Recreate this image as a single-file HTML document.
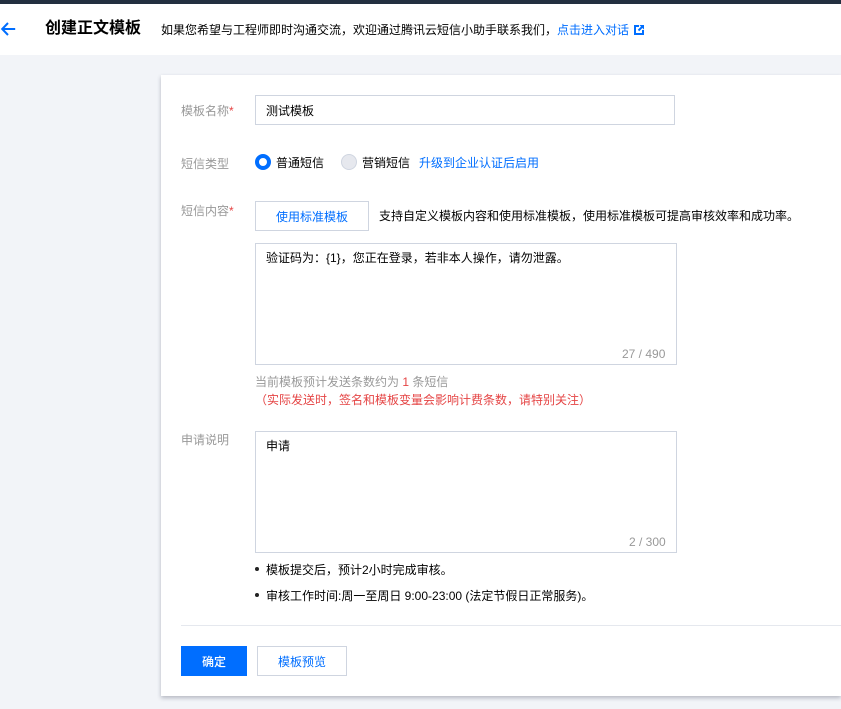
<!DOCTYPE html>
<html lang="zh-CN">
<head>
<meta charset="utf-8">
<title>创建正文模板</title>
<style>
html,body{margin:0;padding:0;width:841px;height:709px;overflow:hidden;background:#f2f4f8;}
body{position:relative;font-family:"Liberation Sans","Noto Sans CJK SC",sans-serif;font-size:12px;color:#000;}
.a{position:absolute;white-space:nowrap;line-height:18px;}
.box{position:absolute;box-sizing:border-box;border:1px solid #cfd5e0;background:#fff;}
.lab{color:#999;}
.blue{color:#006eff;}
.red{color:#e54545;}
</style>
</head>
<body>
<div class="a" style="left:0;top:0;width:841px;height:4px;background:#232f40;"></div>
<div class="a" style="left:0;top:4px;width:841px;height:51px;background:#fff;"></div>

<svg class="a" style="left:0;top:20px;" width="18" height="18" viewBox="0 0 18 18"><path d="M15.2 9H2.5M8 3L2.2 9L8 15" fill="none" stroke="#006eff" stroke-width="2"/></svg>
<div class="a" style="left:45px;top:17px;font-size:16px;line-height:24px;font-weight:bold;color:#000;">创建正文模板</div>
<div class="a" style="left:161px;top:21px;">如果您希望与工程师即时沟通交流，欢迎通过腾讯云短信小助手联系我们，<span class="blue">点击进入对话</span></div>
<svg class="a" style="left:634px;top:25px;" width="10" height="10" viewBox="0 0 10 10"><path d="M0 0H5V2H2V8H8V5H10V10H0Z" fill="#006eff"/><path d="M5.5 0H10V4.5L8.4 3L5.2 6.2L3.8 4.8L7 1.6Z" fill="#006eff"/></svg>

<div class="a" style="left:161px;top:75px;width:680px;height:621px;background:#fff;box-shadow:0 2px 4px rgba(54,58,80,.32);"></div>

<div class="a lab" style="left:181px;top:102px;">模板名称<span class="red">*</span></div>
<div class="box" style="left:255px;top:95px;width:420px;height:30px;"></div>
<div class="a" style="left:266px;top:102px;">测试模板</div>

<div class="a lab" style="left:181px;top:155px;">短信类型</div>
<div class="a" style="left:255px;top:154px;width:16px;height:16px;box-sizing:border-box;border:4px solid #006eff;border-radius:50%;background:#fff;"></div>
<div class="a" style="left:276px;top:154px;">普通短信</div>
<div class="a" style="left:341px;top:154px;width:16px;height:16px;box-sizing:border-box;border:1px solid #cfd5e0;border-radius:50%;background:#e6e8ee;"></div>
<div class="a" style="left:362px;top:154px;">营销短信</div>
<div class="a blue" style="left:419px;top:154px;">升级到企业认证后启用</div>

<div class="a lab" style="left:181px;top:202px;">短信内容<span class="red">*</span></div>
<div class="box" style="left:255px;top:201px;width:114px;height:30px;"></div>
<div class="a blue" style="left:276px;top:208px;">使用标准模板</div>
<div class="a" style="left:379px;top:207px;">支持自定义模板内容和使用标准模板，使用标准模板可提高审核效率和成功率。</div>

<div class="box" style="left:255px;top:243px;width:422px;height:122px;"></div>
<div class="a" style="left:266px;top:249px;">验证码为：{1}，您正在登录，若非本人操作，请勿泄露。</div>
<div class="a" style="left:622px;top:345px;color:#999;">27 / 490</div>

<div class="a" style="left:255px;top:373px;color:#999;">当前模板预计发送条数约为 <span class="red">1</span> 条短信</div>
<div class="a red" style="left:255px;top:391px;">（实际发送时，签名和模板变量会影响计费条数，请特别关注）</div>

<div class="a lab" style="left:181px;top:431px;">申请说明</div>
<div class="box" style="left:255px;top:431px;width:422px;height:122px;"></div>
<div class="a" style="left:266px;top:437px;">申请</div>
<div class="a" style="left:629px;top:533px;color:#999;">2 / 300</div>

<div class="a" style="left:255px;top:567px;width:4px;height:4px;border-radius:50%;background:#222;"></div>
<div class="a" style="left:266px;top:561px;">模板提交后，预计2小时完成审核。</div>
<div class="a" style="left:255px;top:593px;width:4px;height:4px;border-radius:50%;background:#222;"></div>
<div class="a" style="left:266px;top:587px;">审核工作时间:周一至周日 9:00-23:00 (法定节假日正常服务)。</div>

<div class="a" style="left:181px;top:625px;width:660px;height:1px;background:#e5e8ee;"></div>

<div class="a" style="left:181px;top:646px;width:66px;height:30px;background:#006eff;"></div>
<div class="a" style="left:202px;top:653px;color:#fff;font-weight:500;">确定</div>
<div class="box" style="left:257px;top:646px;width:90px;height:30px;"></div>
<div class="a blue" style="left:278px;top:653px;">模板预览</div>
</body>
</html>
